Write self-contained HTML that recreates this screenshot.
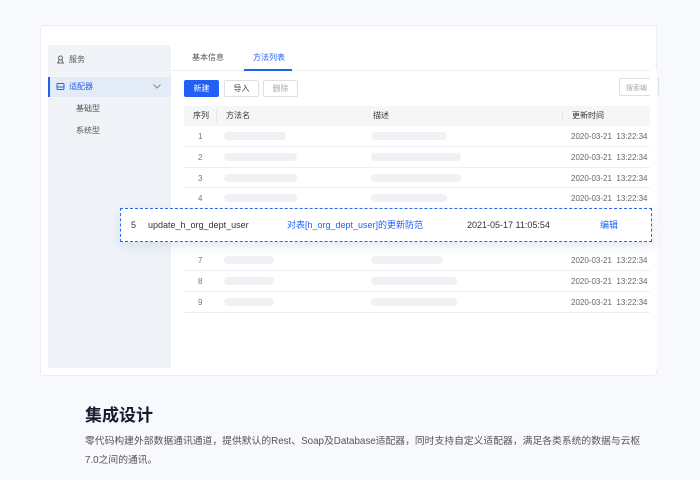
<!DOCTYPE html>
<html><head><meta charset="utf-8"><style>
*{margin:0;padding:0;box-sizing:border-box}
body{width:700px;height:480px;background:#f8f9fc;font-family:"Liberation Sans","Noto Sans CJK SC",sans-serif;position:relative;overflow:hidden;color:#333}
.a{position:absolute}
.card{left:40px;top:25px;width:617px;height:351px;background:#fff;border:1px solid #eceef3;border-radius:3px}
.side{left:48px;top:45px;width:123px;height:323px;background:#f0f4f8}
.t{font-size:8px;white-space:nowrap;line-height:10px}
.pill{position:absolute;height:8px;border-radius:4px;background:#f0f1f4}
.line{position:absolute;left:184px;width:466px;height:1px;background:#eceef2}
.btn{position:absolute;top:80px;height:17px;width:35px;border:1px solid #dcdfe5;border-radius:2px;font-size:8px;text-align:center;line-height:15px;background:#fff}
.r{position:absolute;top:220px;font-size:9px;line-height:11px;height:11px;white-space:nowrap}
</style></head><body>
<div class="a card"></div>
<div class="a side"></div>
<svg class="a" style="left:56px;top:55px" width="9" height="9" viewBox="0 0 9 9"><circle cx="4.5" cy="3" r="2" fill="none" stroke="#666" stroke-width="1"/><path d="M1 8h7M2 8l1-3h3l1 3" fill="none" stroke="#666" stroke-width="1"/></svg>
<div class="a t" style="left:69px;top:55px;color:#555">服务</div>
<div class="a" style="left:48px;top:77px;width:123px;height:20px;background:#e3ebf6;border-left:2px solid #2160f5"></div>
<svg class="a" style="left:56px;top:82px" width="9" height="9" viewBox="0 0 9 9"><rect x="1" y="1.5" width="7" height="6" rx="1" fill="none" stroke="#2160f5" stroke-width="1"/><path d="M1 5h7" stroke="#2160f5"/></svg>
<div class="a t" style="left:69px;top:82px;color:#2160f5">适配器</div>
<svg class="a" style="left:153px;top:84px" width="8" height="5" viewBox="0 0 8 5"><path d="M0.5 0.5L4 4L7.5 0.5" fill="none" stroke="#888" stroke-width="1"/></svg>
<div class="a t" style="left:76px;top:104px;color:#555">基础型</div>
<div class="a t" style="left:76px;top:126px;color:#555">系统型</div>

<div class="a t" style="left:192px;top:53px;color:#555">基本信息</div>
<div class="a t" style="left:253px;top:53px;color:#2160f5">方法列表</div>
<div class="a" style="left:172px;top:70px;width:478px;height:1px;background:#eceef2"></div>
<div class="a" style="left:244px;top:69px;width:48px;height:2px;background:#2160f5"></div>
<div class="btn" style="left:184px;background:#2160f5;border-color:#2160f5;color:#fff">新建</div>
<div class="btn" style="left:224px;color:#444">导入</div>
<div class="btn" style="left:263px;color:#aaa">删除</div>
<div class="a" style="left:619px;top:78px;width:40px;height:18px;border:1px solid #dcdfe5;border-radius:2px;font-size:7px;color:#aaa;padding:4px 0 0 6px;white-space:nowrap;overflow:hidden">搜索编</div>
<div class="a" style="left:650px;top:70px;width:7px;height:300px;background:#fff"></div>

<div class="a" style="left:184px;top:106px;width:466px;height:20px;background:#f5f6f8"></div>
<div class="a t" style="left:193px;top:111px;color:#333">序列</div>
<div class="a" style="left:216px;top:110px;width:1px;height:12px;background:#e2e4e8"></div>
<div class="a t" style="left:226px;top:111px;color:#333">方法名</div>
<div class="a t" style="left:373px;top:111px;color:#333">描述</div>
<div class="a" style="left:562px;top:110px;width:1px;height:12px;background:#e2e4e8"></div>
<div class="a t" style="left:572px;top:111px;color:#333">更新时间</div>

<div class="line" style="top:146px"></div><div class="line" style="top:167px"></div><div class="line" style="top:187px"></div>
<div class="line" style="top:270px"></div><div class="line" style="top:291px"></div><div class="line" style="top:312px"></div>

<div class="a t" style="left:198px;top:132px;color:#777">1</div><div class="pill" style="left:224px;top:132px;width:62px"></div><div class="pill" style="left:371px;top:132px;width:76px"></div><div class="a t" style="left:571px;top:132px;color:#666">2020-03-21&nbsp; 13:22:34</div>
<div class="a t" style="left:198px;top:153px;color:#777">2</div><div class="pill" style="left:224px;top:153px;width:73px"></div><div class="pill" style="left:371px;top:153px;width:90px"></div><div class="a t" style="left:571px;top:153px;color:#666">2020-03-21&nbsp; 13:22:34</div>
<div class="a t" style="left:198px;top:174px;color:#777">3</div><div class="pill" style="left:224px;top:174px;width:73px"></div><div class="pill" style="left:371px;top:174px;width:90px"></div><div class="a t" style="left:571px;top:174px;color:#666">2020-03-21&nbsp; 13:22:34</div>
<div class="a t" style="left:198px;top:194px;color:#777">4</div><div class="pill" style="left:224px;top:194px;width:73px"></div><div class="pill" style="left:371px;top:194px;width:76px"></div><div class="a t" style="left:571px;top:194px;color:#666">2020-03-21&nbsp; 13:22:34</div>
<div class="a t" style="left:198px;top:256px;color:#777">7</div><div class="pill" style="left:224px;top:256px;width:50px"></div><div class="pill" style="left:371px;top:256px;width:72px"></div><div class="a t" style="left:571px;top:256px;color:#666">2020-03-21&nbsp; 13:22:34</div>
<div class="a t" style="left:198px;top:277px;color:#777">8</div><div class="pill" style="left:224px;top:277px;width:50px"></div><div class="pill" style="left:371px;top:277px;width:86px"></div><div class="a t" style="left:571px;top:277px;color:#666">2020-03-21&nbsp; 13:22:34</div>
<div class="a t" style="left:198px;top:298px;color:#777">9</div><div class="pill" style="left:224px;top:298px;width:50px"></div><div class="pill" style="left:371px;top:298px;width:86px"></div><div class="a t" style="left:571px;top:298px;color:#666">2020-03-21&nbsp; 13:22:34</div>

<div class="a" style="left:120px;top:208px;width:532px;height:34px;background:#fff;border:1.5px dashed #2a66f0;box-shadow:0 4px 10px rgba(60,100,200,.15)"></div>
<div class="r" style="left:131px;color:#333">5</div>
<div class="r" style="left:148px;color:#333">update_h_org_dept_user</div>
<div class="r" style="left:287px;color:#2160f5">对表[h_org_dept_user]的更新防范</div>
<div class="r" style="left:467px;color:#333">2021-05-17 11:05:54</div>
<div class="r" style="left:600px;color:#2160f5">编辑</div>

<div class="a" style="left:85px;top:401px;font-size:17px;font-weight:bold;color:#1a1a2e">集成设计</div>
<div class="a" style="left:85px;top:432px;font-size:9.8px;line-height:19px;color:#555;white-space:nowrap">零代码构建外部数据通讯通道，提供默认的Rest、Soap及Database适配器，同时支持自定义适配器，满足各类系统的数据与云枢<br>7.0之间的通讯。</div>
</body></html>
